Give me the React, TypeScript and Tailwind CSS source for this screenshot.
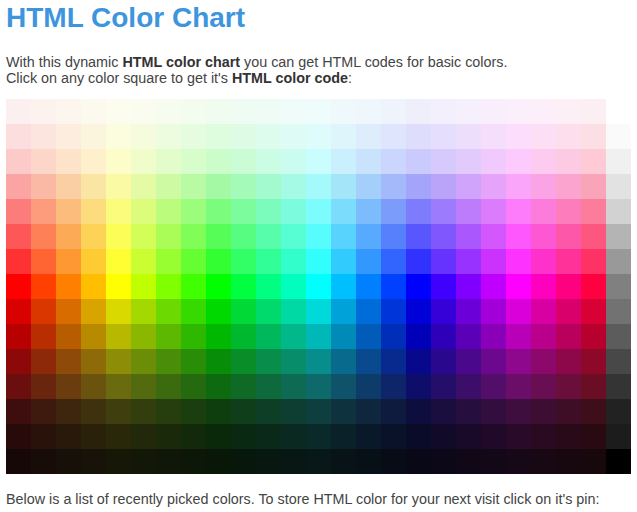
import React from 'react';

// white mix for the 7 light rows, then strength of the pure hue for the 7 dark rows
const lightMix = [0.95, 0.88, 0.8, 0.66, 0.5, 0.35, 0.2];
const darkRows = [
  { f: 0.85, g: 0 },
  { f: 0.72, g: 0 },
  { f: 0.52, g: 8 },
  { f: 0.36, g: 14 },
  { f: 0.19, g: 14 },
  { f: 0.12, g: 10 },
  { f: 0.06, g: 8 },
];
const grays = [250, 240, 226, 210, 180, 153, 128, 114, 92, 72, 52, 34, 28, 0];

const hueRgb = (h: number): number[] => {
  const f = (n: number) => {
    const k = (n + h / 60) % 6;
    return 255 * (1 - Math.max(0, Math.min(k, 4 - k, 1)));
  };
  return [f(5), f(3), f(1)];
};

const rgb = (c: number[]) => `rgb(${c.map((v) => Math.round(v)).join(',')})`;

const cellColor = (col: number, row: number) => {
  const pure = hueRgb(col * 15);
  if (row < 7) {
    const w = lightMix[row];
    const white = row < 3 ? 252 : 248;
    return rgb(pure.map((v) => v * (1 - w) + white * w));
  }
  if (row === 7) return rgb(pure);
  const d = darkRows[row - 8];
  return rgb(pure.map((v) => v * d.f + d.g));
};

const App: React.FC = () => {
  const cols = Array.from({ length: 24 }, (_, i) => i);
  const rows = Array.from({ length: 15 }, (_, i) => i);

  return (
    <div className="min-h-[512px] bg-white pl-[6px] pt-[2px] font-['Liberation_Sans',Arial,sans-serif] text-[#444]">
      <h1 className="text-[28px] leading-[32px] font-bold text-[#3d95dd]">HTML Color Chart</h1>
      <p className="mt-[20px] text-[14.35px] leading-[16px]">
        With this dynamic <b className="text-[#333]">HTML color chart</b> you can get HTML codes for basic colors.
        <br />
        Click on any color square to get it's <b className="text-[#333]">HTML color code</b>:
      </p>

      {/* chart */}
      <div className="mt-[13px] flex">
        {cols.map((c) => (
          <div key={c} className="flex flex-col">
            {rows.map((r) => (
              <div key={r} className="h-[25px] w-[25px] cursor-pointer" style={{ backgroundColor: cellColor(c, r) }} />
            ))}
          </div>
        ))}
        <div className="flex flex-col pt-[25px]">
          {grays.map((g, i) => (
            <div key={i} className="h-[25px] w-[25px] cursor-pointer" style={{ backgroundColor: rgb([g, g, g]) }} />
          ))}
        </div>
      </div>

      <p className="mt-[17px] text-[14.35px] leading-[16px]">
        Below is a list of recently picked colors. To store HTML color for your next visit click on it's pin:
      </p>
    </div>
  );
};

export default App;
